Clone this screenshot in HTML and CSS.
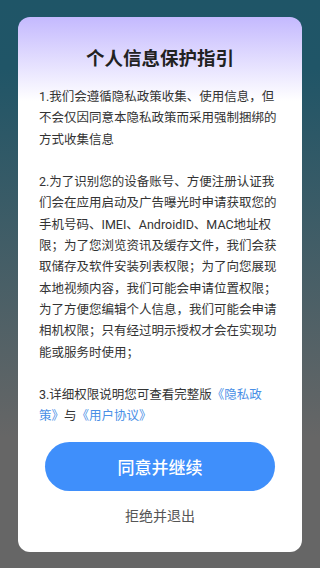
FILE: index.html
```html
<!DOCTYPE html>
<html lang="zh-CN">
<head>
<meta charset="utf-8">
<meta name="viewport" content="width=device-width, initial-scale=1">
<title>个人信息保护指引</title>
<link rel="stylesheet" href="styles.css">
</head>
<body>
<div class="screen">
  <div class="dialog">
    <h1 class="title">个人信息保护指引</h1>
    <div class="content">
      <p class="para">1.我们会遵循隐私政策收集、使用信息，但不会仅因同意本隐私政策而采用强制捆绑的方式收集信息</p>
      <p class="para">2.为了识别您的设备账号、方便注册认证我们会在应用启动及广告曝光时申请获取您的手机号码、IMEI、AndroidID、MAC地址权限；为了您浏览资讯及缓存文件，我们会获取储存及软件安装列表权限；为了向您展现本地视频内容，我们可能会申请位置权限；为了方便您编辑个人信息，我们可能会申请相机权限；只有经过明示授权才会在实现功能或服务时使用；</p>
      <p class="para">3.详细权限说明您可查看完整版<a class="link" href="#">《隐私政<wbr>策》</a>与<a class="link" href="#">《用户协议》</a></p>
    </div>
    <button class="btn-agree" type="button">同意并继续</button>
    <button class="btn-reject" type="button">拒绝并退出</button>
  </div>
</div>
</body>
</html>
```
FILE: styles.css
```css
html, body {
  margin: 0;
  padding: 0;
}
body {
  width: 320px;
  height: 568px;
  overflow: hidden;
  background: linear-gradient(180deg, #1f5567 0%, #205567 12%, #666666 77%, #666666 100%);
  font-family: Roboto, "Noto Sans CJK SC", sans-serif;
}
.screen {
  padding: 17px 18px 16px;
  box-sizing: border-box;
  height: 568px;
}
.dialog {
  display: flex;
  flex-direction: column;
  align-items: center;
  background: linear-gradient(180deg, #c4b9fe 0px, #ffffff 84px, #ffffff 100%);
  border-radius: 12px;
  padding: 30px 21px 26px;
  height: 535px;
  box-sizing: border-box;
}
.title {
  margin: 0;
  font-size: 18.5px;
  line-height: 24px;
  font-weight: 700;
  color: #222222;
  text-align: center;
}
.content {
  margin-top: 15px;
  width: 242px;
  font-size: 12.5px;
  line-height: 21.3px;
  color: #333333;
  word-break: break-all;
}
.para {
  margin: 0 0 21.3px;
}
.para:last-child {
  margin-bottom: 0;
}
.link {
  color: #4a8fe6;
  text-decoration: none;
}
.btn-agree {
  margin-top: 15px;
  width: 230px;
  height: 49px;
  border: none;
  border-radius: 25px;
  background: #3f8ffb;
  color: #ffffff;
  font-family: inherit;
  font-size: 17px;
  font-weight: 500;
  padding: 0;
}
.btn-reject {
  margin-top: 15px;
  border: none;
  background: none;
  padding: 0;
  font-family: inherit;
  font-size: 14px;
  line-height: 20px;
  color: #555555;
}
```
